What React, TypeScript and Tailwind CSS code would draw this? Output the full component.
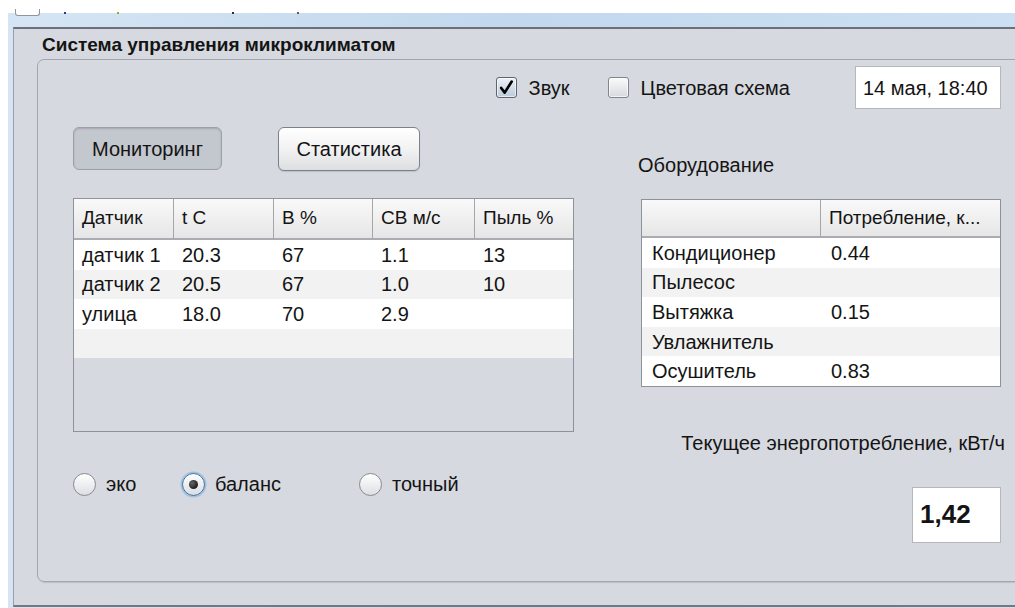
import type { ReactNode } from 'react';

const sensorRows = [
  ['датчик 1', '20.3', '67', '1.1', '13'],
  ['датчик 2', '20.5', '67', '1.0', '10'],
  ['улица', '18.0', '70', '2.9', ''],
  ['', '', '', '', ''],
];

const sensorHeaders = ['Датчик', 't C', 'В %', 'СВ м/с', 'Пыль %'];

const equipmentRows = [
  ['Кондиционер', '0.44'],
  ['Пылесос', ''],
  ['Вытяжка', '0.15'],
  ['Увлажнитель', ''],
  ['Осушитель', '0.83'],
];

function CheckBox({ checked, children }: { checked?: boolean; children: ReactNode }) {
  return (
    <label className="flex items-center gap-[12px] text-[20px] leading-none">
      {checked ? (
        <span className="flex h-[21px] w-[21px] items-center justify-center rounded-[3px] border border-[#5d6570] bg-linear-to-b from-[#eef2f7] to-[#bccadb] shadow-[inset_0_0_0_1px_rgba(255,255,255,0.6)]">
          <svg viewBox="0 0 16 16" className="h-[17px] w-[17px]">
            <path d="M3 8.4 L6.3 12.8 L12.9 2.4" fill="none" stroke="#000" strokeWidth="2.5" strokeLinecap="round" strokeLinejoin="round" />
          </svg>
        </span>
      ) : (
        <span className="h-[21px] w-[21px] rounded-[3px] border border-[#7f858e] bg-linear-to-b from-[#fbfbfb] to-[#d6d9de] shadow-[inset_0_0_0_1px_rgba(255,255,255,0.7)]" />
      )}
      {children}
    </label>
  );
}

function Radio({ selected, children }: { selected?: boolean; children: ReactNode }) {
  return (
    <label className="flex items-center gap-[10px] text-[20px] leading-none">
      <span
        className={
          selected
            ? 'flex h-[23px] w-[23px] items-center justify-center rounded-full border border-[#3f6d99] bg-linear-to-b from-white to-[#d9dde2] shadow-[0_0_0_1.5px_#9fc2e2]'
            : 'flex h-[23px] w-[23px] items-center justify-center rounded-full border border-[#868b92] bg-linear-to-b from-white to-[#dcdfe3]'
        }
      >
        {selected ? (
          <span className="h-[9px] w-[9px] rounded-full bg-[radial-gradient(circle_at_35%_35%,#666,#000)]" />
        ) : null}
      </span>
      {children}
    </label>
  );
}

export default function App() {
  return (
    <div className="relative h-[608px] w-[1015px] overflow-hidden bg-white font-['Liberation_Sans',Arial,sans-serif] text-[#141414]">
      {/* bottom edges of the toolbar row above the frame */}
      <div className="absolute left-[15px] top-[9px] z-10 h-[7px] w-[25px] rounded-b-[3px] border border-t-0 border-[#8f959c] bg-white" />
      <span className="absolute left-[64px] top-[12px] z-10 h-[2px] w-[2px] bg-[#2a3a80]" />
      <span className="absolute left-[117px] top-[12px] z-10 h-[2px] w-[2px] bg-[#b89a2a]" />
      <span className="absolute left-[232px] top-[12px] z-10 h-[2px] w-[2px] bg-[#3a2a2a]" />
      <span className="absolute left-[297px] top-[12px] z-10 h-[2px] w-[2px] bg-[#6a5a3a]" />

      <div className="ml-[8px] mt-[13px] h-[595px] bg-linear-to-r from-[#d5e5f5] via-[#c3d8ed] to-[#cde0f3] pl-[5px] pt-[14px]">
        <section className="h-[580px] border-b-2 border-l border-t-2 border-b-[#737880] border-l-[#9ba0a7] border-t-[#6c7179] bg-[#d6d9df]">
          <h1 className="pl-[28px] pt-[6px] text-[19px] font-bold leading-[20px]">Система управления микроклиматом</h1>

          <div className="ml-[23px] mt-[4px] h-[523px] w-[993px] rounded-[7px] border border-[#a2a6ad] pl-[35px] pr-[28px] pt-[6px] shadow-[1px_1px_1px_rgba(0,0,0,0.12)]">
            <div className="flex h-[43px] items-center justify-end">
              <CheckBox checked>Звук</CheckBox>
              <div className="ml-[38px]">
                <CheckBox>Цветовая схема</CheckBox>
              </div>
              <div className="ml-[65px] flex h-[43px] w-[146px] items-center border border-[#b4b8be] bg-white pl-[7px] text-[20px]">
                14 мая, 18:40
              </div>
            </div>

            <div className="mt-[18px] flex">
              <div className="w-[501px]">
                <div className="flex h-[44px] items-start">
                  <button
                    type="button"
                    className="flex h-[43px] w-[149px] items-center justify-center rounded-[6px] border border-[#9ca1a8] bg-[#c3c7ce] text-[20px] shadow-[inset_0_1px_2px_rgba(0,0,0,0.15)]"
                  >
                    Мониторинг
                  </button>
                  <button
                    type="button"
                    className="ml-[56px] flex h-[44px] w-[142px] items-center justify-center rounded-[6px] border border-[#7c828a] bg-linear-to-b from-white via-[#f2f2f3] to-[#dcdfe2] text-[20px] shadow-[0_1px_1px_rgba(0,0,0,0.12)]"
                  >
                    Статистика
                  </button>
                </div>

                <div className="mt-[27px] flex h-[234px] flex-col border border-[#8e9399] bg-[#d6d9df]">
                  <div className="grid h-[41px] grid-cols-[100px_100px_99px_102px_1fr] border-b-2 border-b-[#a9adb2] bg-linear-to-b from-[#f9f9f9] to-[#e6e6e6]">
                    {sensorHeaders.map((h, i) => (
                      <div
                        key={h}
                        className={
                          i < sensorHeaders.length - 1
                            ? 'flex items-center border-r border-r-[#a3a7ac] pl-[8px] text-[19px]'
                            : 'flex items-center pl-[8px] text-[19px]'
                        }
                      >
                        {h}
                      </div>
                    ))}
                  </div>
                  {sensorRows.map((row, r) => (
                    <div
                      key={r}
                      className={
                        r % 2 === 0
                          ? 'grid h-[29.5px] grid-cols-[100px_100px_99px_102px_1fr] items-center bg-white'
                          : 'grid h-[29.5px] grid-cols-[100px_100px_99px_102px_1fr] items-center bg-[#f2f2f2]'
                      }
                    >
                      {row.map((cell, c) => (
                        <div key={c} className="pl-[8px] text-[20px] leading-none">
                          {cell}
                        </div>
                      ))}
                    </div>
                  ))}
                </div>

                <div className="mt-[40px] flex h-[24px] items-center">
                  <div className="w-[109px]">
                    <Radio>эко</Radio>
                  </div>
                  <div className="w-[177px]">
                    <Radio selected>баланс</Radio>
                  </div>
                  <Radio>точный</Radio>
                </div>
              </div>

              <div className="ml-[64px] flex w-[363px] flex-col">
                <p className="mt-[26px] text-[20px] leading-[24px]">Оборудование</p>

                <div className="ml-[3px] mt-[22px] border border-[#8e9399] bg-white">
                  <div className="grid h-[38px] grid-cols-[179px_1fr] border-b-2 border-b-[#a9adb2] bg-linear-to-b from-[#f9f9f9] to-[#e6e6e6]">
                    <div className="border-r border-r-[#a3a7ac]" />
                    <div className="flex items-center pl-[8px] text-[19px]">Потребление, к...</div>
                  </div>
                  {equipmentRows.map(([name, value], r) => (
                    <div
                      key={name}
                      className={
                        r % 2 === 0
                          ? 'grid h-[29.6px] grid-cols-[179px_1fr] items-center bg-white'
                          : 'grid h-[29.6px] grid-cols-[179px_1fr] items-center bg-[#f2f2f2]'
                      }
                    >
                      <div className="pl-[10px] text-[20px] leading-none">{name}</div>
                      <div className="pl-[10px] text-[20px] leading-none">{value}</div>
                    </div>
                  ))}
                </div>

                <p className="-mr-[4px] mt-[44px] text-right text-[20px] leading-[24px]">Текущее энергопотребление, кВт/ч</p>

                <div className="mt-[32px] flex h-[56px] w-[89px] items-center self-end border border-[#b4b8be] bg-white pl-[7px] text-[26px] font-bold">
                  1,42
                </div>
              </div>
            </div>
          </div>
        </section>
      </div>
    </div>
  );
}
